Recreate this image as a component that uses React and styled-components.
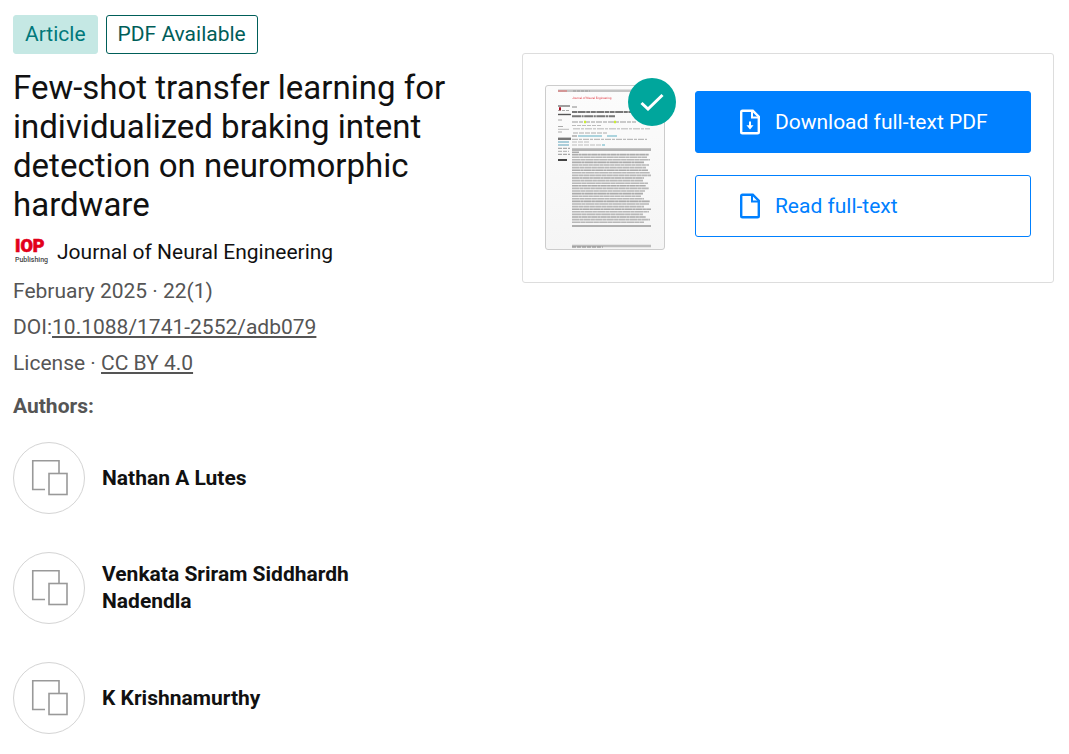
import React from 'react'
import styled, { createGlobalStyle } from 'styled-components'

const TEAL = '#00a69c'
const BLUE = '#0080ff'
const GREY = '#555'

const GlobalStyle = createGlobalStyle`
  * {
    box-sizing: border-box;
  }

  body {
    margin: 0;
    background: white;
    color: #111;
    font-family: Roboto, 'Liberation Sans', sans-serif;
    font-size: 21px;
    line-height: 27px;
  }
`

const Page = styled.main`
  display: grid;
  grid-template-columns: 9fr 10fr;
  align-items: start;
  gap: 30px;
  padding: 15px 15px 20px 13px;
`

const Badges = styled.div`
  display: flex;
  gap: 8px;
`

const Badge = styled.span`
  padding: 5px 11px;
  border: 1px solid ${({ $outlined }) => ($outlined ? '#005e59' : '#c5e8e4')};
  border-radius: 3px;
  background: ${({ $outlined }) => ($outlined ? 'white' : '#c5e8e4')};
  color: ${({ $outlined }) => ($outlined ? '#005e59' : '#00787a')};
`

const Title = styled.h1`
  margin: 14px 0 12px;
  font-size: 33px;
  font-weight: 400;
  line-height: 39px;
`

const Journal = styled.div`
  display: flex;
  align-items: center;
  gap: 8px;
`

const Meta = styled.ul`
  margin: 5px 0 12px;
  padding: 0;
  list-style: none;
  color: ${GREY};
  line-height: 36px;
`

const MetaLink = styled.a`
  color: inherit;
  text-decoration: underline;
`

const AuthorsHeading = styled.h2`
  margin: 0;
  color: ${GREY};
  font-size: 21px;
  font-weight: 700;
`

const AuthorList = styled.ul`
  display: flex;
  flex-direction: column;
  gap: 38px;
  margin: 22px 0 0;
  padding: 0;
  list-style: none;
`

const AuthorItem = styled.li`
  display: flex;
  align-items: center;
  gap: 17px;
  max-width: 360px;
`

const AuthorLink = styled.a`
  color: inherit;
  font-weight: 700;
  text-decoration: none;
`

const Avatar = styled.span`
  display: flex;
  flex: none;
  align-items: center;
  justify-content: center;
  width: 72px;
  height: 72px;
  border: 1px solid #d4d4d4;
  border-radius: 50%;
`

const Card = styled.section`
  display: flex;
  align-items: flex-start;
  gap: 30px;
  margin-top: 38px;
  padding: 31px 22px 32px;
  border: 1px solid #ddd;
  border-radius: 3px;
`

const Preview = styled.div`
  position: relative;
  flex: none;
  width: 120px;
  height: 165px;
  border: 1px solid #ccc;
  border-radius: 3px;
  background: linear-gradient(#fcfcfc, #f5f5f5);
`

const Check = styled.span`
  position: absolute;
  top: -8px;
  right: -12px;
  display: flex;
  align-items: center;
  justify-content: center;
  width: 48px;
  height: 48px;
  border-radius: 50%;
  background: ${TEAL};
`

const Actions = styled.div`
  display: flex;
  flex: 1;
  flex-direction: column;
  gap: 22px;
  padding-top: 6px;
`

const ActionButton = styled.button`
  display: flex;
  align-items: center;
  gap: 15px;
  min-height: 62px;
  padding: 0 20px 0 44px;
  border: 1px solid ${BLUE};
  border-radius: 3px;
  background: ${({ $primary }) => ($primary ? BLUE : 'white')};
  color: ${({ $primary }) => ($primary ? 'white' : BLUE)};
  font: inherit;
  text-align: left;
  cursor: pointer;
`

const IopLogo = () => (
  <svg width="36" height="32" viewBox="0 0 36 32" role="img" aria-label="IOP Publishing">
    <text fontFamily="Roboto">
      <tspan
        x="2"
        y="16"
        fontSize="18"
        fontWeight="900"
        fill="#e2001a"
        stroke="#e2001a"
        strokeWidth="0.6"
      >
        IOP
      </tspan>
      <tspan x="2" y="26" fontSize="7" fontWeight="500" fill="#444">
        Publishing
      </tspan>
    </text>
  </svg>
)

const FileIcon = ({ download }) => (
  <svg width="20" height="26" viewBox="0 0 20 26" fill="none" stroke="currentColor" strokeWidth="2.4">
    <path d="M1.2 3Q1.2 1.7 2.5 1.7H12.8L18.8 7.7V23Q18.8 24.3 17.5 24.3H2.5Q1.2 24.3 1.2 23Z" />
    <path d="M12 2V8.5H18.5" strokeWidth="2" />
    {download && (
      <>
        <path d="M10 12.5V18" strokeWidth="2" />
        <path d="M6.5 16.3H13.5L10 20.5Z" fill="currentColor" stroke="none" />
      </>
    )}
  </svg>
)

const AvatarIcon = () => (
  <svg width="38" height="38" viewBox="0 0 38 38" fill="none" stroke="#999" strokeWidth="1.6">
    <path d="M15 30.5H2.75V1.75H29V14" />
    <rect x="19" y="14.5" width="18" height="21" />
  </svg>
)

// one stroke per printed line: [x1, x2, y, colour, thickness, dashes]
const headLines = [
  [12, 105, 4.8, '#c4c4c4', 2.6],
  [12, 21, 5, '#d77', 1.2],
  [27, 44, 5, '#999', 1, '3 1'],
  [12, 24, 20, '#444', 1],
  [12, 24, 24.5, '#aaa', 1, '3 1'],
  [13, 15, 22.8, '#a12', 3],
  [26, 31, 21, '#888', 1],
  [12, 25, 28.5, '#555', 1.4],
  [26, 98, 26, '#777', 2, '5 0.6 8 0.6 4 0.6'],
  [26, 69, 30.3, '#777', 2, '9 0.6 2 0.6'],
  [26, 90, 36, '#bbb', 1.6, '6 1 4 1'],
  [38, 40, 36, '#ce3', 2.4],
  [68, 70, 36, '#ce3', 2.4],
  [26, 55, 39.5, '#bbb', 1, '4 1'],
  [27, 104, 42.8, '#ccc', 1.4, '7 1 3 1'],
  [27, 61, 47, '#aaa', 1.2, '5 1'],
  [26, 31, 50, '#999', 1.2],
  [32, 56, 50, '#7bc', 1.2],
  [61, 71, 50, '#7bc', 1.2],
  [26, 101, 53.3, '#bbb', 1.2, '6 1 3 1'],
  [26, 43, 56, '#bbb', 1.2, '5 1'],
  [26, 55, 59, '#bbb', 1.2, '5 1'],
  [56, 59, 59, '#7bc', 1.2],
  [12, 16, 34, '#aaa', 1],
  [12, 17, 40.5, '#aaa', 1],
  [12, 23, 43.3, '#bbb', 1],
  [12, 16, 46, '#aaa', 1],
  [12, 25, 52.8, '#777', 2.4],
  [12, 23, 56, '#8bc', 1.4],
  [12, 23, 59, '#8bc', 1.4],
  [12, 24, 62.3, '#aaa', 1.2, '4 1'],
  [12, 23, 65.3, '#bbb', 1.2, '4 1'],
  [12, 24, 68.3, '#aaa', 1.2, '4 1'],
  [12, 21, 74, '#444', 2],
  [26, 105, 63.6, '#b4b4b4', 2.6],
  [26, 33, 66.2, '#888', 1],
  [26, 105, 140, '#999', 1.6],
  [26, 105, 160, '#bdbdbd', 2.6],
  [26, 57, 161, '#888', 1, '4 1'],
]

const abstractEnds = [
  103, 101, 104, 98, 103, 100, 102, 104, 105, 98, 97, 102, 100, 103, 99, 97, 95, 98, 104, 103, 98,
  105, 103, 97, 100, 104, 98,
]

const abstractLines = abstractEnds.map((end, i) => [
  26,
  end,
  68.6 + i * 2.6,
  i % 3 ? '#b8b8b8' : '#acacac',
  1.6,
  `${6 + (i % 4)} 0.3 ${3 + (i % 3)} 0.3`,
])

const PagePreview = () => (
  <svg width="118" height="163" viewBox="0 0 118 163">
    <filter id="soften">
      <feGaussianBlur stdDeviation="0.5" />
    </filter>
    <g filter="url(#soften)">
      <text
        x="26"
        y="13"
        fontFamily="Roboto"
        fontSize="3"
        fill="#e0303c"
        textRendering="geometricPrecision"
      >
        Journal of Neural Engineering
      </text>
      {[...headLines, ...abstractLines].map(([x1, x2, y, stroke, strokeWidth, dashes], i) => (
        <path
          key={i}
          d={`M${x1} ${y}H${x2}`}
          stroke={stroke}
          strokeWidth={strokeWidth}
          strokeDasharray={dashes}
        />
      ))}
    </g>
  </svg>
)

const authors = ['Nathan A Lutes', 'Venkata Sriram Siddhardh Nadendla', 'K Krishnamurthy']

const Author = ({ name }) => (
  <AuthorItem>
    <Avatar>
      <AvatarIcon />
    </Avatar>
    <AuthorLink href="#">{name}</AuthorLink>
  </AuthorItem>
)

const App = () => (
  <>
    <GlobalStyle />
    <Page>
      <div>
        <Badges>
          <Badge>Article</Badge>
          <Badge $outlined>PDF Available</Badge>
        </Badges>
        <Title>
          Few-shot transfer learning for individualized braking intent detection on neuromorphic
          hardware
        </Title>
        <Journal>
          <IopLogo />
          Journal of Neural Engineering
        </Journal>
        <Meta>
          <li>February 2025 · 22(1)</li>
          <li>
            DOI:<MetaLink href="#">10.1088/1741-2552/adb079</MetaLink>
          </li>
          <li>
            License · <MetaLink href="#">CC BY 4.0</MetaLink>
          </li>
        </Meta>
        <AuthorsHeading>Authors:</AuthorsHeading>
        <AuthorList>
          {authors.map((name) => (
            <Author key={name} name={name} />
          ))}
        </AuthorList>
      </div>
      <Card>
        <Preview>
          <PagePreview />
          <Check>
            <svg width="24" height="18" viewBox="0 0 24 18" fill="none" stroke="white" strokeWidth="3">
              <path d="M1.5 10L8 16L22.5 2" />
            </svg>
          </Check>
        </Preview>
        <Actions>
          <ActionButton $primary>
            <FileIcon download />
            Download full-text PDF
          </ActionButton>
          <ActionButton>
            <FileIcon />
            Read full-text
          </ActionButton>
        </Actions>
      </Card>
    </Page>
  </>
)

export default App
